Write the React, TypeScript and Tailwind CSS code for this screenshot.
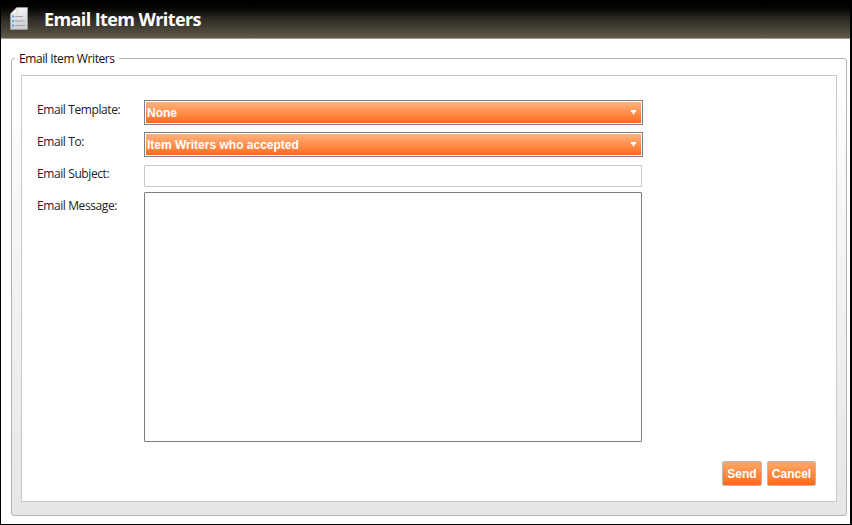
function DocIcon() {
  return (
    <svg width="18" height="23" viewBox="0 0 18 23" className="block">
      <defs>
        <linearGradient id="page" x1="0" y1="0" x2="0" y2="1">
          <stop offset="0" stopColor="#f4f4f4" />
          <stop offset="1" stopColor="#c9cbd0" />
        </linearGradient>
      </defs>
      <path d="M7 0.5 L17.5 0.5 L17.5 22.5 L0.5 22.5 L0.5 7 Z" fill="url(#page)" stroke="#a9abb0" strokeWidth="0.5" />
      <path d="M0.5 7 L7 7 L7 0.5 Z" fill="#fbfbfb" stroke="#b5b7bb" strokeWidth="0.5" />
      <rect x="2" y="8.5" width="2" height="2" fill="#5aa0e8" />
      <rect x="5" y="9" width="8" height="1" fill="#a3a5aa" />
      <rect x="2" y="13" width="2" height="2" fill="#5aa0e8" />
      <rect x="5" y="13.5" width="10" height="1" fill="#a3a5aa" />
      <rect x="2" y="17.5" width="2" height="2" fill="#5aa0e8" />
      <rect x="5" y="18" width="10" height="1" fill="#a3a5aa" />
    </svg>
  );
}

function Select({ value }: { value: string }) {
  return (
    <div className="w-[499px] h-[25px] border border-[#7f7f7f] p-px bg-white">
      <div className="h-full flex items-center justify-between pl-px pr-[5px] bg-gradient-to-b from-[#ffb27a] to-[#ff6a08] text-white text-[12px] font-bold font-['Liberation_Sans',sans-serif]">
        <span>{value}</span>
        <svg width="5" height="5" viewBox="0 0 5 5" className="block">
          <path d="M0 0 H5 V2 H4 L2.5 5 L1 2 H0 Z" fill="#fff" />
        </svg>
      </div>
    </div>
  );
}

function Button({ label, width }: { label: string; width: string }) {
  return (
    <button className={`${width} h-[25px] rounded-[2px] border border-[#b9b9b9] bg-gradient-to-b from-[#ffa767] to-[#ff6c0c] text-white text-[12px] font-bold font-['Liberation_Sans',sans-serif]`}>
      {label}
    </button>
  );
}

function Row({ label, labelClass, children }: { label: string; labelClass?: string; children: React.ReactNode }) {
  return (
    <div className="flex">
      <div className={`w-[107px] text-[12px] leading-4 tracking-[-0.4px] text-[#222] ${labelClass ?? ''}`}>{label}</div>
      {children}
    </div>
  );
}

export default function App() {
  return (
    <div className="w-[852px] h-[525px] overflow-hidden bg-white border-l border-b border-r-2 border-black flex flex-col font-['Open_Sans',sans-serif]">
      <header className="h-[39px] shrink-0 flex items-center gap-[16px] pl-[9px] pb-[1px] border-b border-[#a09c94] bg-gradient-to-b from-black via-[#2e2b24] to-[#605949]">
        <DocIcon />
        <h1 className="text-[18px] font-bold text-white leading-none tracking-[-0.6px]">Email Item Writers</h1>
      </header>

      <div className="flex-1 min-h-0 pl-[10px] pr-[3px] pt-[11px] pb-[8px] flex">
        <fieldset className="flex-1 min-w-0 border border-[#b4b4b4] rounded-[3px] px-[9px] pb-[13px] bg-gradient-to-b from-white to-[#e6e6e6] flex flex-col">
          <legend className="-ml-[6px] px-[4px] text-[12px] leading-4 tracking-[-0.4px] text-[#111]">
            <span className="block translate-y-px">Email Item Writers</span>
          </legend>
          <div className="mt-[9px] flex-1 min-h-0 border border-[#c9c9c9] bg-white pl-[15px] pr-[20px] pt-[24px] pb-[15px] flex flex-col">
            <div className="flex flex-col">
              <Row label="Email Template:" labelClass="mt-[2px]">
                <Select value="None" />
              </Row>
              <div className="mt-[7px]">
                <Row label="Email To:" labelClass="mt-[2px]">
                  <Select value="Item Writers who accepted" />
                </Row>
              </div>
              <div className="mt-[8px]">
                <Row label="Email Subject:" labelClass="mt-[1px]">
                  <input className="w-[498px] h-[22px] border border-[#c9c9c9] rounded-[1px] bg-white outline-none" />
                </Row>
              </div>
              <div className="mt-[5px]">
                <Row label="Email Message:" labelClass="mt-[6px]">
                  <textarea className="w-[498px] h-[250px] border border-[#7b7b7b] rounded-[1px] bg-white outline-none resize-none" />
                </Row>
              </div>
            </div>
            <div className="mt-auto flex justify-end gap-[5px]">
              <Button label="Send" width="w-[40px]" />
              <Button label="Cancel" width="w-[49px]" />
            </div>
          </div>
        </fieldset>
      </div>
    </div>
  );
}
